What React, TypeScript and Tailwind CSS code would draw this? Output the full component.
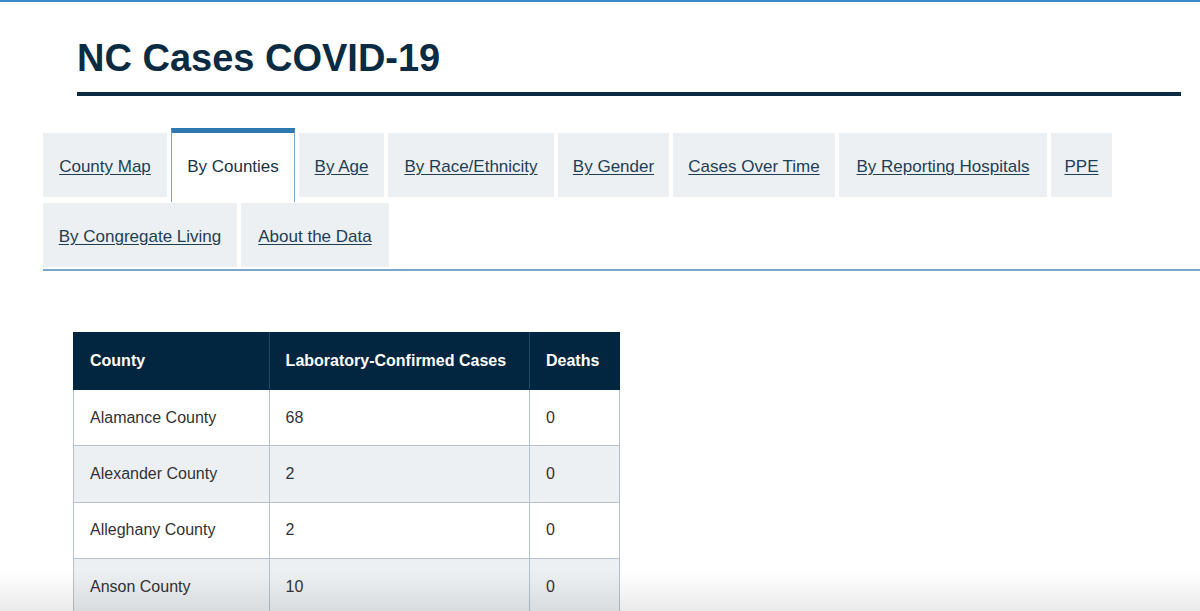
import React from 'react';

interface Tab {
  label: string;
  width: string;
  active?: boolean;
}

const tabs: Tab[] = [
  { label: 'County Map', width: 'w-[124px]' },
  { label: 'By Counties', width: 'w-[124px]', active: true },
  { label: 'By Age', width: 'w-[85px]' },
  { label: 'By Race/Ethnicity', width: 'w-[166px]' },
  { label: 'By Gender', width: 'w-[111px]' },
  { label: 'Cases Over Time', width: 'w-[162px]' },
  { label: 'By Reporting Hospitals', width: 'w-[208px]' },
  { label: 'PPE', width: 'w-[61px]' },
  { label: 'By Congregate Living', width: 'w-[194px]' },
  { label: 'About the Data', width: 'w-[148px]' },
];

const rows = [
  { county: 'Alamance County', cases: 68, deaths: 0 },
  { county: 'Alexander County', cases: 2, deaths: 0 },
  { county: 'Alleghany County', cases: 2, deaths: 0 },
  { county: 'Anson County', cases: 10, deaths: 0 },
];

const App: React.FC = () => {
  return (
    <div
      className="relative min-h-[611px] bg-white border-t-2 border-[#3b8bc9] overflow-hidden"
      style={{ fontFamily: '"Liberation Sans", Arial, sans-serif' }}
    >
      {/* Page title */}
      <div className="ml-[77px] w-[1104px] pt-[37px] pb-[15px] border-b-4 border-[#0b2b43]">
        <h1 className="text-[38px] leading-[38px] font-bold text-[#0b2b43]">NC Cases COVID-19</h1>
      </div>

      {/* Tabs */}
      <div className="ml-[43px] mt-[37px] flex flex-wrap items-start gap-x-[4px] gap-y-[6px] pb-[2px] border-b-2 border-[#7da6c8]">
        {tabs.map((tab) =>
          tab.active ? (
            <div
              key={tab.label}
              className={`${tab.width} h-[74px] -mt-[5px] -mb-[5px] pb-[2px] flex items-center justify-center bg-white border-t-[5px] border-x border-t-[#2f78b0] border-x-[#7aa5ca] text-[17px] text-[#1b3347]`}
            >
              {tab.label}
            </div>
          ) : (
            <a
              key={tab.label}
              href="#"
              className={`${tab.width} h-[64px] pt-[4px] flex items-center justify-center bg-[#ecf0f3] text-[17px] text-[#1f3e56] underline underline-offset-2`}
            >
              {tab.label}
            </a>
          )
        )}
      </div>

      {/* County table */}
      <table className="ml-[73px] mt-[61px] w-[547px] border-collapse text-[16px]">
        <thead>
          <tr className="bg-[#02263f] text-white">
            <th className="w-[196px] h-[57px] px-4 text-left font-bold border border-[#02263f] border-r-[#1e4a68]">County</th>
            <th className="w-[261px] h-[57px] px-4 text-left font-bold border border-[#02263f] border-r-[#1e4a68]">
              Laboratory-Confirmed Cases
            </th>
            <th className="w-[90px] h-[57px] px-4 text-left font-bold border border-[#02263f]">Deaths</th>
          </tr>
        </thead>
        <tbody className="text-[#333333]">
          {rows.map((row, i) => (
            <tr key={row.county} className={i % 2 === 0 ? 'bg-white' : 'bg-[#ecf0f3]'}>
              <td className="h-[56.4px] px-4 border border-[#b6c1cb]">{row.county}</td>
              <td className="h-[56.4px] px-4 border border-[#b6c1cb]">{row.cases}</td>
              <td className="h-[56.4px] px-4 border border-[#b6c1cb]">{row.deaths}</td>
            </tr>
          ))}
        </tbody>
      </table>

      {/* bottom fade */}
      <div className="pointer-events-none fixed bottom-0 inset-x-0 h-[40px] bg-linear-to-b from-transparent to-black/[0.08]"></div>
    </div>
  );
};

export default App;
